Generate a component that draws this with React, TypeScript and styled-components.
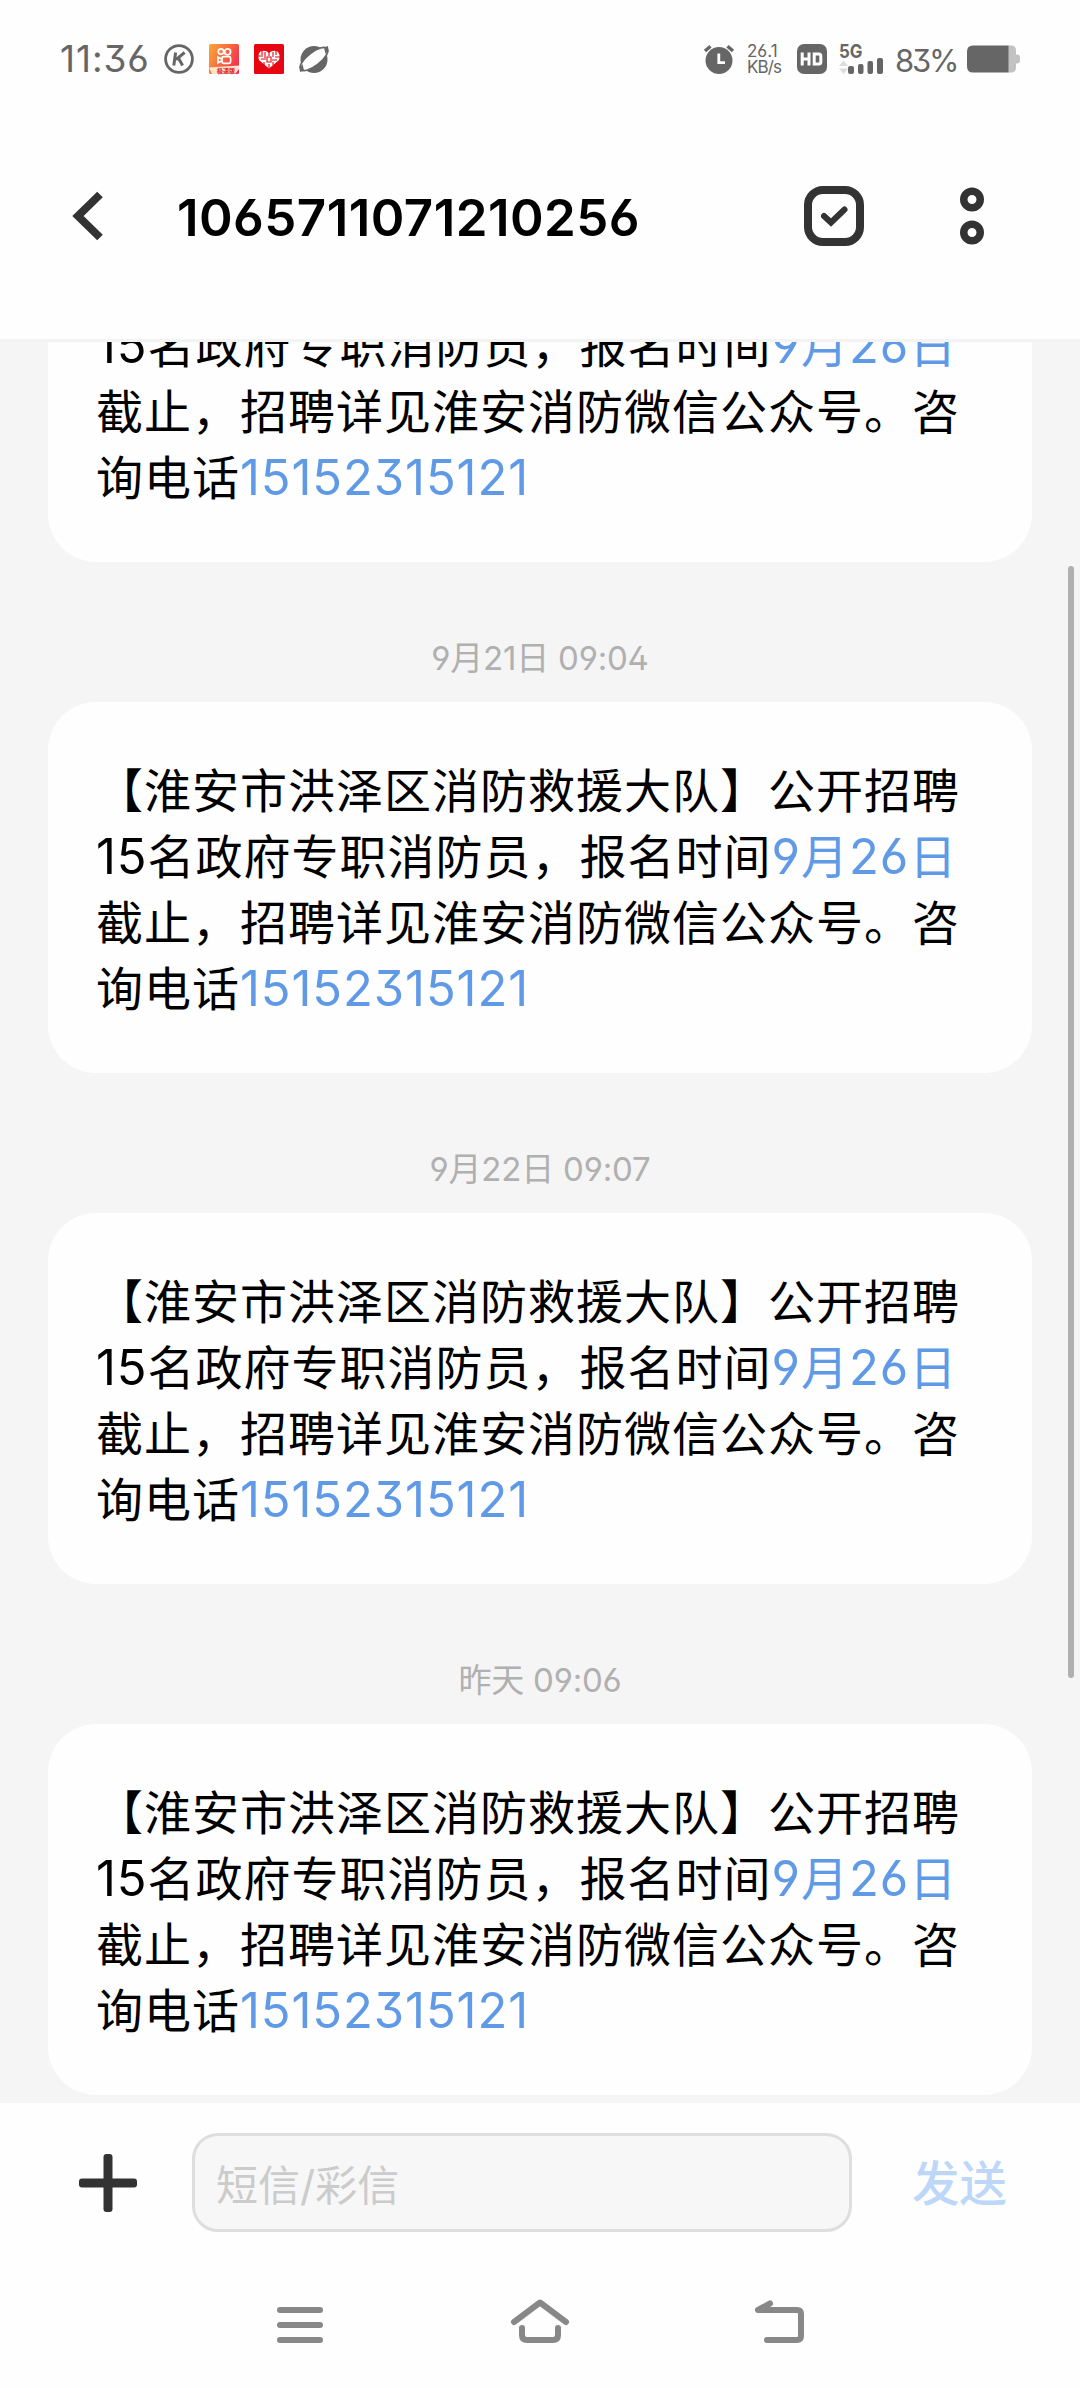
import React from "react";
import styled, { createGlobalStyle } from "styled-components";

const GlobalStyle = createGlobalStyle`
  *, *::before, *::after { box-sizing: border-box; }
  body {
    margin: 0;
    background: #fefefe;
    font-family: Inter, "Noto Sans CJK SC", sans-serif;
    font-feature-settings: "cv02", "cv03", "cv04", "ss01";
    text-spacing-trim: space-all;
  }
  svg { display: block; flex: none; overflow: visible; }
`;

const Screen = styled.div`
  width: 1080px;
  height: 2388px;
  display: flex;
  flex-direction: column;
  overflow: hidden;
  background: #fefefe;
`;

const StatusBar = styled.div`
  height: 118px;
  flex: none;
  display: flex;
  align-items: center;
  justify-content: space-between;
  padding: 0 60px;
  color: #666;
`;

const StatusGroup = styled.div`
  display: flex;
  align-items: center;
`;

const Clock = styled.span`
  width: 104px;
  font-size: 37px;
  line-height: 40px;
  letter-spacing: 0.9px;
  white-space: nowrap;
`;

const AppIcons = styled.div`
  display: flex;
  align-items: center;
  gap: 15px;
`;

const NetSpeed = styled.div`
  width: 50px;
  margin-left: 13px;
  display: flex;
  flex-direction: column;
  font-size: 17px;
  line-height: 16px;
  white-space: nowrap;
`;

const SpeedLine = styled.span<{ $track: number }>`
  letter-spacing: ${(p) => p.$track}px;
`;

const Signal = styled.div`
  margin-left: 12px;
`;

const Battery = styled.span`
  width: 72px;
  margin-left: 11px;
  padding-top: 3px;
  font-size: 31px;
  line-height: 36px;
  letter-spacing: -2.2px;
  white-space: nowrap;
`;

const Header = styled.header`
  height: 224px;
  flex: none;
  display: flex;
  align-items: center;
  padding: 0 96px 26px 72px;
  border-bottom: 3px solid #f3f3f3;
`;

const Title = styled.h1`
  flex: 1;
  margin: 4px 0 0 73px;
  font-size: 51px;
  font-weight: 600;
  line-height: 60px;
  letter-spacing: 0.45px;
  color: #000;
  white-space: nowrap;
`;

const HeaderActions = styled.div`
  display: flex;
  align-items: center;
  gap: 96px;
`;

const Thread = styled.main`
  position: relative;
  height: 1761px;
  flex: none;
  display: flex;
  flex-direction: column;
  justify-content: flex-end;
  overflow: hidden;
  padding: 0 48px 8px;
  background: #f5f5f5;
`;

const Bubble = styled.article`
  height: 371px;
  flex: none;
  padding: 56px 46px 0 48px;
  border-radius: 48px;
  background: #fefefe;
  color: #000;
  font-size: 47px;
  line-height: 66px;
  letter-spacing: 1px;
`;

const Line = styled.div`
  height: 66px;
  white-space: nowrap;
`;

const Digits = styled.span`
  font-size: 49px;
  letter-spacing: 0.9px;
`;

const Link = styled.a`
  color: #609ae6;
`;

const Timestamp = styled.time`
  height: 140px;
  flex: none;
  padding-top: 71px;
  text-align: center;
  font-size: 33px;
  line-height: 50px;
  letter-spacing: -0.2px;
  color: #b0b0b0;
`;

const ScrollThumb = styled.div`
  position: absolute;
  top: 224px;
  right: 6px;
  width: 6px;
  height: 1112px;
  border-radius: 3px;
  background: #b0b0b0;
`;

const Composer = styled.footer`
  height: 159px;
  flex: none;
  display: flex;
  align-items: center;
  padding: 0 72px 0 79px;
`;

const Field = styled.div`
  width: 660px;
  height: 99px;
  margin-left: 55px;
  display: flex;
  align-items: center;
  padding: 0 21px 1px;
  border: 3px solid #dedede;
  border-radius: 26px;
  background: #f7f7f7;
  font-size: 42px;
  font-weight: 400;
  color: #cbcbcb;
`;

const Send = styled.span`
  margin: -5px 0 0 60px;
  font-size: 47.5px;
  font-weight: 500;
  color: #bcd7f8;
  white-space: nowrap;
`;

const NavBar = styled.nav`
  flex: 1;
  display: flex;
  justify-content: center;
  gap: 180px;
  padding-top: 32px;
`;

const messages: (string | null)[] = [null, "9月21日 09:04", "9月22日 09:07", "昨天 09:06"];

function MessageBubble() {
  return (
    <Bubble>
      <Line>【淮安市洪泽区消防救援大队】公开招聘</Line>
      <Line>
        <Digits>15</Digits>名政府专职消防员，报名时间
        <Link>
          <Digits>9</Digits>月<Digits>26</Digits>日
        </Link>
      </Line>
      <Line>截止，招聘详见淮安消防微信公众号。咨</Line>
      <Line>
        询电话
        <Link>
          <Digits>15152315121</Digits>
        </Link>
      </Line>
    </Bubble>
  );
}

function NotificationIcons() {
  return (
    <AppIcons>
      <svg width="30" height="30" viewBox="0 0 30 30" fill="none" stroke="#666">
        <circle cx="15" cy="15" r="13.4" strokeWidth="2.8" />
        <path d="M11.6 8.5 9.8 21.5M20.6 8.5 12 15.6M14.4 14 18.6 21.5" strokeWidth="3" />
      </svg>
      <svg width="30" height="30" viewBox="0 0 30 30">
        <defs>
          <linearGradient id="orange" x1="0" y1="0.2" x2="1" y2="0.7">
            <stop offset="0" stopColor="#f9a03c" />
            <stop offset="0.5" stopColor="#f8693c" />
            <stop offset="1" stopColor="#f02d52" />
          </linearGradient>
        </defs>
        <rect width="30" height="30" rx="1.5" fill="url(#orange)" />
        <g fill="none" stroke="#fff" strokeWidth="1.7">
          <circle cx="12" cy="7.5" r="2.7" />
          <circle cx="18.6" cy="7.8" r="3" />
          <rect x="13" y="12.6" width="8.6" height="6.8" rx="1.6" />
          <path d="M13 15.2 9 13.2v5.6l4-2" />
        </g>
        <path d="M0 23.5 30 21.5V25L26 30H3z" fill="#fde6c8" />
        <text x="8" y="28.8" fontSize="6" fontWeight="900" fill="#e0302c" fontFamily="Noto Sans CJK SC, sans-serif">极速版</text>
      </svg>
      <svg width="30" height="30" viewBox="0 0 30 30">
        <rect width="30" height="30" rx="1.5" fill="#e60510" />
        <path d="M15 24.500 5.200 16.200Q3 11 6.500 7.500 11 5.200 15 9 19 5.200 23.500 7.500 27 11 24.800 16.200Z" fill="#fff" />
        <path d="M4 12h5M8 6v5M11 8v6M7 15h5M10 18v3M15 8v4M13 13h4v5h-4zM19 8v5M22 6v5M21 13h5M18 16h5M19 18v3M15 20v4" fill="none" stroke="#e60510" strokeWidth="1.1" />
      </svg>
      <svg width="30" height="30" viewBox="0 0 30 30">
        <circle cx="15" cy="15.500" r="13.500" fill="#666" />
        <ellipse cx="15" cy="15" rx="16.800" ry="6.600" transform="rotate(-38 15 15)" fill="#fefefe" stroke="#666" strokeWidth="1.800" />
        <path d="M1.200 28q-1.500-3 2.300-8l1.500 6.500zM28.800 2q1.500 3-2.300 8L25 3.500z" fill="#666" />
      </svg>
    </AppIcons>
  );
}

function AlarmIcon() {
  return (
    <svg width="30" height="30" viewBox="0 0 30 30" fill="none">
      <circle cx="15" cy="16.500" r="13.500" fill="#666" />
      <path d="M1 7 6.500 2.200M23.500 2.200 29 7" stroke="#666" strokeWidth="3.400" />
      <path d="M14.800 9.500v9.200h6.200" stroke="#fff" strokeWidth="2.800" />
    </svg>
  );
}

function HdIcon() {
  return (
    <svg width="30" height="30" viewBox="0 0 30 30" fill="none">
      <rect width="30" height="30" rx="7" fill="#666" />
      <path d="M5.200 8.500v13M12 8.500v13M5.200 15H12M17.200 10h4.600q2 0 2 2v6q0 2-2 2h-4.600z" stroke="#fff" strokeWidth="3" />
    </svg>
  );
}

function SignalIcon() {
  return (
    <svg width="45" height="32" viewBox="0 0 45 32">
      <text x="0" y="15" fontSize="19" fontWeight="700" fill="#666" textLength="23.500" lengthAdjust="spacingAndGlyphs">5G</text>
      <path d="M0 23 4.500 17.500 9 23ZM0 25.500h9L4.500 31Z" fill="#ddd" />
      <g fill="#666">
        <rect x="9" y="23" width="6" height="8" rx="2" />
        <rect x="19" y="21" width="5.500" height="10" rx="2" />
        <rect x="28.500" y="18" width="5.500" height="13" rx="2" />
        <rect x="38" y="15" width="6" height="16" rx="2" />
      </g>
    </svg>
  );
}

function BatteryIcon() {
  return (
    <svg width="53" height="28" viewBox="0 0 53 28">
      <path d="M41 .5h3q5 0 5 5v4h1q3 0 3 3v3q0 3-3 3h-1v4q0 5-5 5h-3z" fill="#c2c2c2" />
      <path d="M6 .5h35.500v27H6q-6 0-6-6v-15q0-6 6-6z" fill="#666" />
    </svg>
  );
}

export default function App() {
  return (
    <Screen>
      <GlobalStyle />
      <StatusBar>
        <StatusGroup>
          <Clock>11:36</Clock>
          <NotificationIcons />
        </StatusGroup>
        <StatusGroup>
          <AlarmIcon />
          <NetSpeed>
            <SpeedLine $track={0}>26.1</SpeedLine>
            <SpeedLine $track={-0.9}>KB/s</SpeedLine>
          </NetSpeed>
          <HdIcon />
          <Signal>
            <SignalIcon />
          </Signal>
          <Battery>83%</Battery>
          <BatteryIcon />
        </StatusGroup>
      </StatusBar>

      <Header>
        <svg width="32" height="50" viewBox="0 0 32 50" fill="none" stroke="#333" strokeWidth="8">
          <path d="M28 3.500 6 25 28 46.500" />
        </svg>
        <Title>1065711071210256</Title>
        <HeaderActions>
          <svg width="60" height="60" viewBox="0 0 60 60" fill="none" stroke="#333">
            <rect x="4" y="4" width="52" height="52" rx="15" strokeWidth="8" />
            <path d="M20 30 27 36.500 40.500 23.500" strokeWidth="6" strokeLinecap="round" />
          </svg>
          <svg width="24" height="58" viewBox="0 0 24 58" fill="none" stroke="#333" strokeWidth="7.500">
            <circle cx="12" cy="12.500" r="8.250" />
            <circle cx="12" cy="45.500" r="8.250" />
          </svg>
        </HeaderActions>
      </Header>

      <Thread>
        {messages.map((time, i) => (
          <React.Fragment key={i}>
            {time && <Timestamp>{time}</Timestamp>}
            <MessageBubble />
          </React.Fragment>
        ))}
        <ScrollThumb />
      </Thread>

      <Composer>
        <svg width="58" height="58" viewBox="0 0 58 58" fill="#333">
          <rect x="24.500" y="0" width="9" height="58" rx="3" />
          <rect x="0" y="24.500" width="58" height="9" rx="3" />
        </svg>
        <Field>短信/彩信</Field>
        <Send>发送</Send>
      </Composer>

      <NavBar>
        <svg width="60" height="56" viewBox="0 0 60 56" stroke="#888" strokeWidth="6" strokeLinecap="round">
          <path d="M10 16h40M10 31h40M10 46h40" />
        </svg>
        <svg width="60" height="56" viewBox="0 0 60 56" fill="none" stroke="#888" strokeWidth="6" strokeLinecap="round" strokeLinejoin="round">
          <path d="M4 28 30 8.500 56 28M12 34v7q0 5 5 5h26q5 0 5-5v-7" />
        </svg>
        <svg width="60" height="56" viewBox="0 0 60 56" fill="none" stroke="#888" strokeWidth="6" strokeLinecap="round" strokeLinejoin="round">
          <path d="M20 9.500 8 16h39q4 0 4 4v22q0 4-4 4H17" />
        </svg>
      </NavBar>
    </Screen>
  );
}
